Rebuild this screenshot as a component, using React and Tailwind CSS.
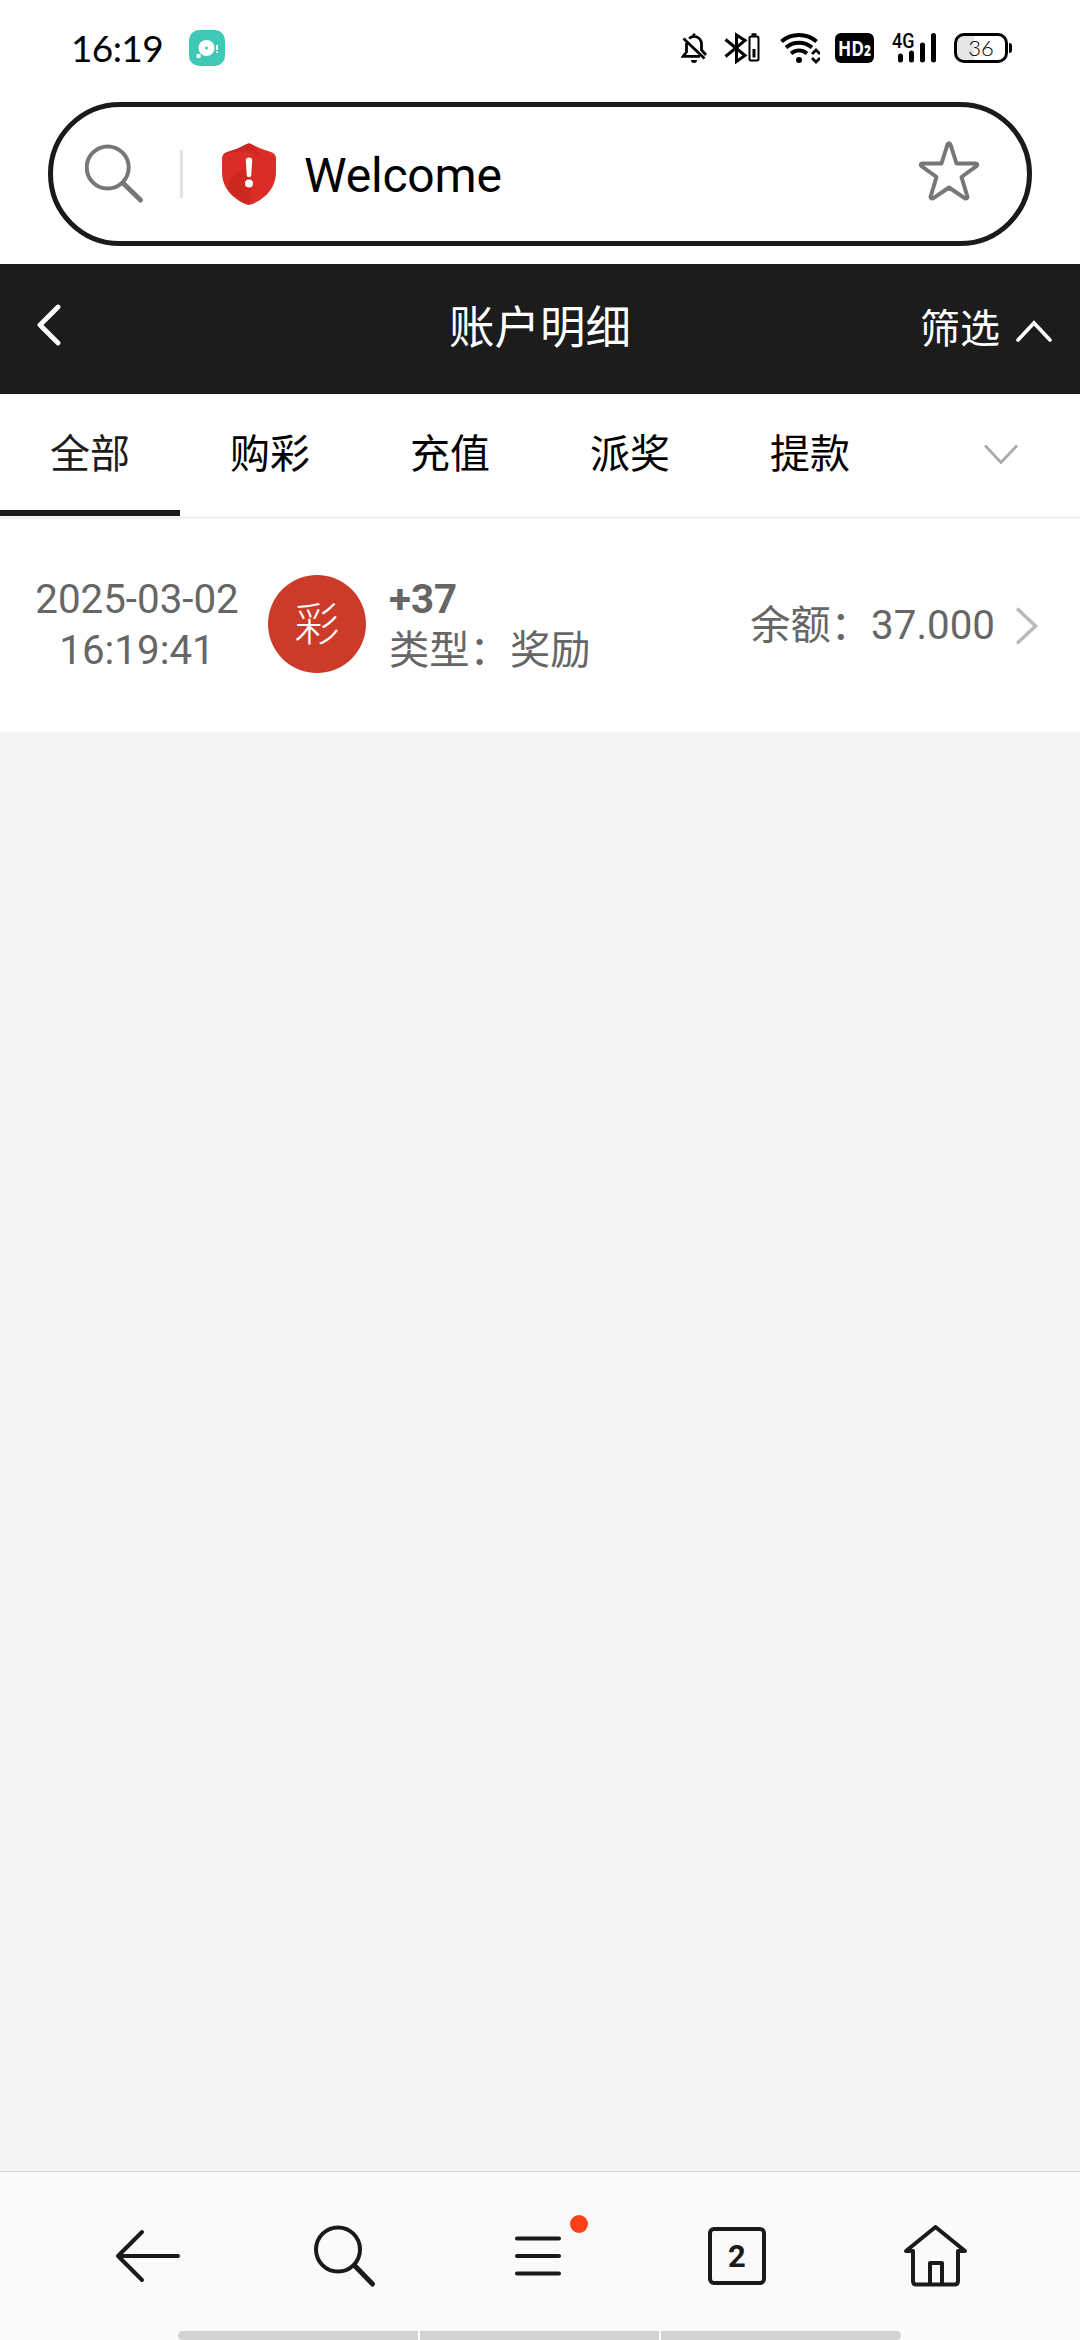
import React from 'react';

const TABS = ['全部', '购彩', '充值', '派奖', '提款'];

function StatusBar() {
  return (
    <div className="flex items-center h-[102px] pb-[6px] pl-[71px] pr-[68px] text-black">
      <span className="w-[118px] font-['Lato','Noto_Sans',sans-serif] text-[37px] leading-[40px] tracking-[-0.6px] whitespace-nowrap">16:19</span>
      <svg className="w-9 h-9" viewBox="0 0 36 36">
        <rect width="36" height="36" rx="10" fill="#40c8b6" />
        <circle cx="17.5" cy="18" r="8" fill="#fff" />
        <circle cx="17.5" cy="18" r="1.5" fill="#40c8b6" />
        <circle cx="9.6" cy="26" r="2.3" fill="#fff" />
        <path d="M28 15v5M28 21.5v1.5" stroke="#fff" strokeWidth="1.8" />
      </svg>
      <div className="flex items-center ml-auto">
        <svg className="w-[26px] h-8" viewBox="0 0 26 32" fill="none" stroke="#000" strokeWidth="2.8">
          <path d="M8.2 6.6C9.5 5 11.2 4.4 13 4.4c4.4 0 7.500 3.400 7.500 7.600v6l4.500 5M13 4.400V1.500M5.500 11V20L2 24.400h17M2.500 6.500l21 20" />
          <path d="M10 28h6a3 3 0 0 1-6 0z" fill="#000" stroke="none" />
        </svg>
        <svg className="w-[36px] h-8 ml-[17px]" viewBox="0 0 36 32" fill="none" stroke="#000" strokeWidth="3">
          <path d="M1.500 7.500l19.500 16-8.500 6V3l8.500 5.500-19.500 16" />
          <rect x="25.500" y="4.500" width="9" height="24" rx="1.500" strokeWidth="2" />
          <path d="M27.500 2.500h5" strokeWidth="2.500" />
          <path d="M30 17v8.500" strokeWidth="3" />
        </svg>
        <svg className="w-10 h-8 ml-[20px]" viewBox="0 0 40 32" fill="none" stroke="#000" strokeWidth="4">
          <path d="M1.500 9.500C11 .8 27 .8 36.500 9.500M6 15.500C13.500 9 24.500 9 32 15.500M11 21.500c5-4 11-4 16 0" />
          <circle cx="19" cy="28" r="3" fill="#000" stroke="none" />
          <path d="M32 22l4-4 4 4M32 26l4 4 4-4" strokeWidth="2.800" />
        </svg>
        <svg className="w-[39px] h-[30px] ml-[15px]" viewBox="0 0 39 30" fill="#fff">
          <rect width="39" height="30" rx="6" fill="#000" />
          <text x="3" y="22.500" textLength="33" lengthAdjust="spacingAndGlyphs" className="font-['Open_Sans',sans-serif] font-bold text-[22px]">
            HD<tspan className="font-extrabold text-[15px]">2</tspan>
          </text>
        </svg>
        <svg className="w-[44px] h-9 -mt-1 ml-[18px]" viewBox="0 -4 44 36" fill="none">
          <path d="M8.500 24v4M19.500 21v7M30.500 13v15M41.500 3.500v24.500" stroke="#000" strokeWidth="5" strokeLinecap="round" />
          <text x="0" y="15.500" textLength="22.500" lengthAdjust="spacingAndGlyphs" fill="#000" className="font-['Roboto',sans-serif] font-medium text-[20px]">4G</text>
        </svg>
        <div className="flex items-center ml-[18px]">
          <div className="flex items-center justify-center w-[54px] h-[30px] border-[3px] border-black rounded-[10px] bg-linear-to-r from-[#e6e6e6] from-36% to-white to-36% font-['Lato',sans-serif] font-light text-[22px] leading-[24px]">36</div>
          <div className="w-[3px] h-[10px] ml-px rounded-r-sm bg-black" />
        </div>
      </div>
    </div>
  );
}

function AddressBar() {
  return (
    <div className="flex items-center h-36 mx-12 pl-[32px] pr-[47px] border-[5px] border-[#1a1a1a] rounded-full">
      <svg className="w-[60px] h-[60px]" viewBox="0 0 60 60" fill="none" stroke="#777" strokeLinecap="round">
        <circle cx="22.700" cy="23.500" r="21" strokeWidth="4" />
        <path d="M38.500 39.500L55.500 56" strokeWidth="5" />
      </svg>
      <div className="w-[3px] h-12 ml-[35px] bg-[#e2e2e2]" />
      <svg className="w-[54px] h-[62px] ml-[39px]" viewBox="0 0 54 62">
        <path d="M24 1.500Q27-.5 30 1.500 39 6.500 49 9q5 1.500 5 7v13c0 17-12 27-23.500 32q-3.500 1.500-7 0C12 56 0 46 0 29V16q0-5.500 5-7 10-2.500 19-7.500z" fill="#db2d27" />
        <path d="M6 9q9-2.500 18-7.500Q27-.5 30 1.500q5 4 8 13-8-8-18-6Q10 9 2 13 3 10 6 9z" fill="#cc2821" />
        <path d="M23 26Q9 29 6 45q7 11 17.500 16l3.500.800 2-16z" fill="#cc2821" />
        <path d="M23.800 17q0-2.500 3.200-2.500t3.200 2.500l-1 15.500q-.2 1.500-2.200 1.500t-2.200-1.500z" fill="#fff" />
        <circle cx="27" cy="40.500" r="4" fill="#fff" />
      </svg>
      <span className="ml-[28px] mt-[3px] text-black text-5xl leading-[60px] tracking-[-0.2px]">Welcome</span>
      <svg className="w-[62px] h-[60px] ml-auto mb-[6px]" viewBox="0 0 62 60" fill="none" stroke="#777" strokeWidth="4" strokeLinejoin="round">
        <path d="M29.500 3.500q1.500-2.500 3 0L38.500 22.500H57.500q3 .7 1 2.700L43.500 36l6 20q-.3 2-2.500 1.300L31 46.500 15 57.300q-2.200.700-2.500-1.300L18.500 36 3.500 25.200q-2-2 1-2.700H23.500z" />
      </svg>
    </div>
  );
}

function PageHeader() {
  return (
    <div className="grid grid-cols-3 items-center h-[130px] mt-[18px] pl-[37px] pr-[27px] bg-[#1c1c1c] text-white">
      <svg className="w-6 h-[42px] mb-[8px]" viewBox="0 0 24 42" fill="none" stroke="#fff" strokeWidth="4.800" strokeLinecap="round" strokeLinejoin="round">
        <path d="M21 3L3 21 21 39" />
      </svg>
      <span className="-ml-[10px] pb-px text-center text-[45.500px] leading-[60px]">账户明细</span>
      <div className="flex items-center justify-end pt-px">
        <span className="text-[40px] leading-[60px]">筛选</span>
        <svg className="w-[38px] h-6 ml-[15px] mt-[3px]" viewBox="0 0 38 24" fill="none" stroke="#fff" strokeWidth="3.600" strokeLinecap="round">
          <path d="M3 21L19 4l16 17" />
        </svg>
      </div>
    </div>
  );
}

function Tabs() {
  return (
    <div className="flex h-[125px] border-b-[3px] border-[#f3f3f3] bg-white">
      {TABS.map((tab, i) => (
        <div
          key={tab}
          className={`w-[180px] h-[122px] pt-[31px] border-b-[6px] text-center text-[40px] leading-[60px] ${
            i === 0 ? 'border-[#1c1c1c] text-[#1c1c1c]' : 'border-transparent text-black'
          }`}
        >
          {tab}
        </div>
      ))}
      <div className="flex-1 flex justify-center pt-[50px] pl-[22px]">
        <svg className="w-[34px] h-[22px]" viewBox="0 0 34 22" fill="none" stroke="#aaa" strokeWidth="2.800">
          <path d="M1 1.500l16 17 16-17" />
        </svg>
      </div>
    </div>
  );
}

function RecordRow() {
  return (
    <div className="flex items-center h-[213px] pl-[35px] pr-[41px] pb-[3px] bg-white text-[#666] text-[40.300px] leading-[51px]">
      <div className="w-[204px] pt-px text-center whitespace-nowrap">
        <div>2025-03-02</div>
        <div>16:19:41</div>
      </div>
      <div className="flex items-center justify-center w-[98px] h-[98px] ml-[29px] pt-[2px] rounded-full bg-[#cc3b29] text-white text-[45px] font-light">彩</div>
      <div className="ml-[23px] pt-[2px]">
        <div className="font-bold">+37</div>
        <div>类型：奖励</div>
      </div>
      <div className="ml-auto pt-[3px]">余额：37.000</div>
      <svg className="w-[24px] h-[40px] ml-[20px] mt-[4px]" viewBox="0 0 24 40" fill="none" stroke="#bbb" strokeWidth="3.600">
        <path d="M2 2.500L20.500 20 2 37.500" />
      </svg>
    </div>
  );
}

function BottomNav() {
  return (
    <div className="flex flex-col h-[169px] border-t border-[#d8d8d8] bg-[#fafafa]">
      <div className="flex items-center h-[159px] pt-[9px] pl-[114px] shrink-0">
        <svg className="w-[68px] h-[64px]" viewBox="114 2224 68 64" fill="none" stroke="#1a1a1a" strokeWidth="4" strokeLinecap="round" strokeLinejoin="round">
          <path d="M178 2256H118M142 2232l-24 24 24 24" />
        </svg>
        <svg className="w-[64px] h-[64px] ml-[131px]" viewBox="313 2224 64 64" fill="none" stroke="#1a1a1a" strokeLinecap="round">
          <circle cx="338" cy="2249.500" r="22" strokeWidth="4" />
          <path d="M355 2266L372.500 2284" strokeWidth="5" />
        </svg>
        <div className="relative ml-[137px]">
          <svg className="w-[48px] h-[64px]" viewBox="514 2224 48 64" stroke="#1a1a1a" strokeWidth="4" strokeLinecap="round">
            <path d="M517 2238.500h42M517 2256h42M517 2273.500h42" />
          </svg>
          <span className="absolute -top-[9px] left-[56px] size-[18px] rounded-full bg-[#ff4019]" />
        </div>
        <div className="flex items-center justify-center size-[58px] ml-[146px] pt-[2px] border-4 border-[#1a1a1a] rounded-[6px] font-bold text-[31px] text-[#1a1a1a]">2</div>
        <svg className="w-[66px] h-[64px] ml-[137px]" viewBox="903 2223 66 64" fill="none" stroke="#1a1a1a" strokeWidth="4" strokeLinecap="round" strokeLinejoin="round">
          <path d="M913 2250h-7L935.500 2226 965 2250h-7v30q0 3.500-3.500 3.500h-38q-3.500 0-3.500-3.500zM930 2283v-21h12v21" />
        </svg>
      </div>
      <div className="flex gap-[2px] w-[723px] h-[9px] ml-[178px] rounded-[5px] overflow-hidden bg-white shrink-0">
        <div className="flex-1 bg-[#d2d2d2]" />
        <div className="flex-1 bg-[#d2d2d2]" />
        <div className="flex-1 bg-[#d2d2d2]" />
      </div>
    </div>
  );
}

export default function App() {
  return (
    <div className="flex flex-col w-[1080px] h-[2340px] overflow-hidden bg-white font-['Roboto','Noto_Sans_CJK_SC',sans-serif]">
      <StatusBar />
      <AddressBar />
      <PageHeader />
      <Tabs />
      <RecordRow />
      <div className="flex-1 bg-[#f3f3f3]" />
      <BottomNav />
    </div>
  );
}
